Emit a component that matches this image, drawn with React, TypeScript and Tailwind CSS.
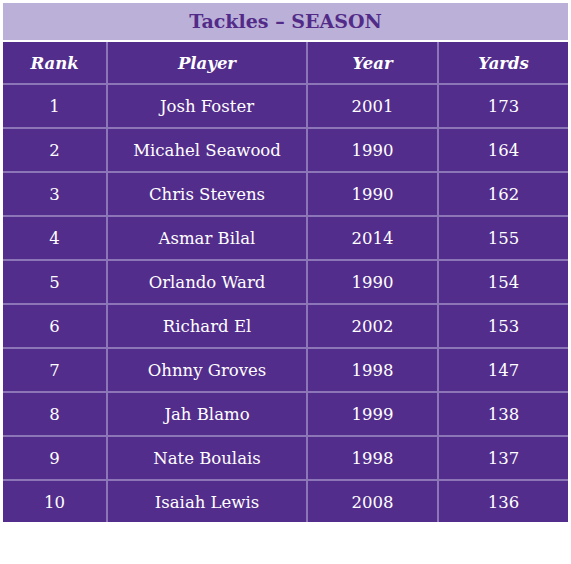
const rows = [
  ["1", "Josh Foster", "2001", "173"],
  ["2", "Micahel Seawood", "1990", "164"],
  ["3", "Chris Stevens", "1990", "162"],
  ["4", "Asmar Bilal", "2014", "155"],
  ["5", "Orlando Ward", "1990", "154"],
  ["6", "Richard El", "2002", "153"],
  ["7", "Ohnny Groves", "1998", "147"],
  ["8", "Jah Blamo", "1999", "138"],
  ["9", "Nate Boulais", "1998", "137"],
  ["10", "Isaiah Lewis", "2008", "136"],
];

const cols = "grid grid-cols-[105px_200px_131px_129px]";
const cell = "flex items-center justify-center pt-[3px] border-r-2 border-[#8d76b8] last:border-r-0";

export default function App() {
  return (
    <div className="w-[571px] h-[564px] bg-white pt-[3px] pl-[3px] font-['DejaVu_Serif',serif]">
      <div className="w-[565px]">
        <div className="h-[37px] bg-[#bbb0d8] flex items-center justify-center text-[19px] font-bold text-[#522b88]">
          Tackles – SEASON
        </div>
        <div className="mt-[2px] bg-[#532d8b] text-white">
          <div className={`${cols} h-[43px] border-b-2 border-[#8d76b8] text-[16.5px] font-bold italic`}>
            <div className={cell}>Rank</div>
            <div className={cell}>Player</div>
            <div className={cell}>Year</div>
            <div className={cell}>Yards</div>
          </div>
          {rows.map((r, i) => (
            <div
              key={r[0]}
              className={`${cols} ${i < rows.length - 1 ? "h-[44px] border-b-2 border-[#8d76b8]" : "h-[41px]"} text-[16.5px]`}
            >
              {r.map((v, j) => (
                <div key={j} className={cell}>
                  {v}
                </div>
              ))}
            </div>
          ))}
        </div>
      </div>
    </div>
  );
}
